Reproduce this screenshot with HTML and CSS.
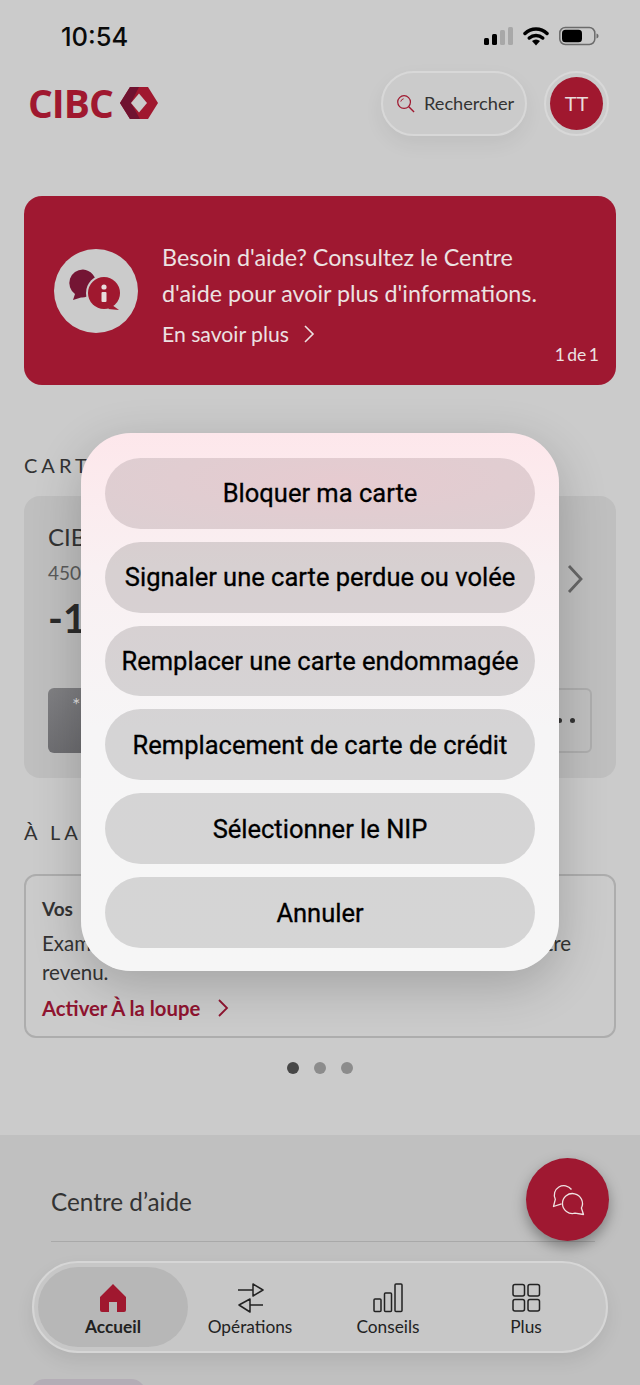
FILE: index.html
```html
<!DOCTYPE html>
<html lang="fr">
<head>
  <meta charset="UTF-8">
  <meta name="viewport" content="width=device-width, initial-scale=1.0">
  <title>CIBC Accueil</title>
  <link rel="stylesheet" href="styles.css">
</head>
<body>
  <div class="ecran">
    <div class="statut">
      <span class="heure">10:54</span>
      <div class="statut-icones">
        <svg width="29" height="20" viewBox="0 0 29 20"><rect x="0" y="12" width="5" height="7" rx="1.5" fill="#000"/><rect x="8" y="8" width="5" height="11" rx="1.5" fill="#000"/><rect x="16" y="4" width="5" height="15" rx="1.5" fill="#a8a8a8"/><rect x="24" y="1" width="5" height="18" rx="1.5" fill="#a8a8a8"/></svg>
        <svg width="26" height="20" viewBox="0 0 26 20"><path d="M2 7.500a16 16 0 0 1 22 0M6.300 12a10 10 0 0 1 13.400 0" fill="none" stroke="#000" stroke-width="3.500" stroke-linecap="round"/><path d="M13 19.500l-4-4.500a6 6 0 0 1 8 0z" fill="#000"/></svg>
        <svg width="40" height="20" viewBox="0 0 40 20"><rect x="0.800" y="1.500" width="35" height="17" rx="5.500" fill="none" stroke="#6b6b6b" stroke-width="1.500"/><rect x="3" y="3.800" width="20" height="12.400" rx="3.500" fill="#000"/><path d="M37.500 7.500c1.500.5 2 1.500 2 2.500s-.5 2-2 2.500z" fill="#6b6b6b"/></svg>
      </div>
    </div>

    <header class="entete">
      <div class="logo">
        <span class="logo-texte">CIBC</span>
        <svg width="38" height="32" viewBox="0 0 38 32"><path d="M0 16L10 0h18l10 16-10 16H10z" fill="#a0182f"/><path d="M0 16L10 0h9L11 16l9 16H10z" fill="#6f1230"/><path d="M19 6.500l8 9.500-8 9.500-8-9.500z" fill="#cbcbcb"/></svg>
      </div>
      <div class="entete-droite">
        <div class="recherche">
          <svg width="19" height="19" viewBox="0 0 20 20"><circle cx="8.500" cy="8.500" r="6.700" fill="none" stroke="#a0182f" stroke-width="1.300"/><path d="M13.500 13.500L19 19" stroke="#a0182f" stroke-width="1.500"/><path d="M5 8a4 4 0 0 1 3-3" fill="none" stroke="#a0182f"/></svg>
          <span>Rechercher</span>
        </div>
        <div class="avatar-halo"><div class="avatar">TT</div></div>
      </div>
    </header>

    <section class="banniere">
      <div class="banniere-icone">
        <svg width="84" height="84" viewBox="0 0 84 84">
          <path d="M29 20.500a13.500 13.500 0 0 0-8 24.500l-2 6 8-2.500a13.500 13.500 0 0 0 2-28z" fill="#741534"/>
          <circle cx="50" cy="44" r="18" fill="#cbcbcb"/>
          <circle cx="50" cy="44" r="16" fill="#a0182f"/>
          <path d="M58 56l7 5-11-1z" fill="#a0182f"/>
          <circle cx="50" cy="38" r="2.600" fill="#e8dcdc"/>
          <rect x="47.500" y="43" width="5" height="10" rx="1" fill="#e8dcdc"/>
        </svg>
      </div>
      <div class="banniere-texte">
        <p>Besoin d'aide? Consultez le Centre<br>d'aide pour avoir plus d'informations.</p>
        <a class="banniere-lien">En savoir plus
          <svg width="12" height="20" viewBox="0 0 12 20"><path d="M2 2l8 8-8 8" fill="none" stroke="#ece2e2" stroke-width="1.600"/></svg>
        </a>
      </div>
      <span class="banniere-page">1 de 1</span>
    </section>

    <h2 class="titre-section titre-cartes">CARTES</h2>
    <section class="carte">
      <div class="carte-haut">
        <div>
          <div class="carte-nom">CIBC</div>
          <div class="carte-numero">4500</div>
          <div class="carte-solde">-1 250</div>
        </div>
        <svg class="carte-fleche" width="16" height="28" viewBox="0 0 16 28"><path d="M2 1l12 13L2 27" fill="none" stroke="#666" stroke-width="2.800"/></svg>
      </div>
      <div class="carte-actions">
        <div class="action-sombre">*</div>
        <div class="action-claire"><i></i><i></i></div>
      </div>
    </section>

    <h2 class="titre-section titre-loupe">À LA LOUPE</h2>
    <section class="loupe">
      <h3>Vos</h3>
      <p class="loupe-ligne"><span>Examinez</span><span>votre</span></p>
      <p>revenu.</p>
      <a class="loupe-lien">Activer À la loupe
        <svg width="12" height="20" viewBox="0 0 12 20"><path d="M2 2l8 8-8 8" fill="none" stroke="#8f1430" stroke-width="1.800"/></svg>
      </a>
    </section>
    <div class="points"><i class="actif"></i><i></i><i></i></div>

    <section class="bas">
      <div class="bas-ligne">Centre d’aide</div>
    </section>

    <button class="bulle">
      <svg width="42" height="42" viewBox="0 0 42 42">
        <path d="M24.500 10.500A9.500 9.500 0 0 0 8.300 20.300L6.500 27.500 14.500 24.800" fill="none" stroke="#efe3e3" stroke-width="1.300" stroke-linejoin="round"/>
        <path d="M28 34.200A10 10 0 1 1 34.400 29L36.500 35.500z" fill="none" stroke="#efe3e3" stroke-width="1.300" stroke-linejoin="round"/>
      </svg>
    </button>

    <nav class="menu">
      <a class="menu-item actif">
        <svg width="30" height="30" viewBox="0 0 30 30"><path d="M15 1L2 14v13a2 2 0 0 0 2 2h7V19h8v10h7a2 2 0 0 0 2-2V14z" fill="#a0182f"/></svg>
        <span>Accueil</span>
      </a>
      <a class="menu-item">
        <svg width="30" height="30" viewBox="0 0 30 30"><path d="M3 7h15M18 1l10 6-10 6zM15 22h13M15 16L4 22l11 7z" fill="none" stroke="#222" stroke-width="1.500" stroke-linejoin="round"/></svg>
        <span>Opérations</span>
      </a>
      <a class="menu-item">
        <svg width="30" height="30" viewBox="0 0 30 30"><rect x="1" y="16" width="7" height="12.500" rx="1" fill="none" stroke="#222" stroke-width="1.500"/><rect x="11.500" y="10" width="7" height="18.500" rx="1" fill="none" stroke="#222" stroke-width="1.500"/><rect x="22" y="1" width="7" height="27.500" rx="1" fill="none" stroke="#222" stroke-width="1.500"/></svg>
        <span>Conseils</span>
      </a>
      <a class="menu-item">
        <svg width="30" height="30" viewBox="0 0 30 30"><rect x="2" y="1.500" width="11.500" height="11.500" rx="2" fill="none" stroke="#222" stroke-width="1.500"/><rect x="17" y="1.500" width="11.500" height="11.500" rx="2" fill="none" stroke="#222" stroke-width="1.500"/><rect x="2" y="16.500" width="11.500" height="11.500" rx="2" fill="none" stroke="#222" stroke-width="1.500"/><rect x="17" y="16.500" width="11.500" height="11.500" rx="2" fill="none" stroke="#222" stroke-width="1.500"/></svg>
        <span>Plus</span>
      </a>
    </nav>
    <div class="pastille"></div>

    <div class="dialogue">
      <button>Bloquer ma carte</button>
      <button>Signaler une carte perdue ou volée</button>
      <button>Remplacer une carte endommagée</button>
      <button>Remplacement de carte de crédit</button>
      <button>Sélectionner le NIP</button>
      <button>Annuler</button>
    </div>
  </div>
</body>
</html>
```

FILE: styles.css
```css
* { box-sizing: border-box; margin: 0; padding: 0; }
body {
  font-family: 'Lato', sans-serif;
  background: #cbcbcb;
  color: #2b2b2b;
  overflow: hidden;
}
a { display: inline-flex; align-items: center; }
.ecran {
  position: relative;
  width: 640px;
  height: 1385px;
  overflow: hidden;
  padding: 0 24px;
}

.statut {
  display: flex;
  justify-content: space-between;
  align-items: center;
  height: 72px;
  padding: 0 17px 0 37px;
}
.heure { font-family: 'Inter', sans-serif; font-size: 25.500px; font-weight: 500; color: #0a0a0a; }
.statut-icones { display: flex; align-items: center; gap: 10px; }

.entete {
  display: flex;
  justify-content: space-between;
  align-items: center;
  height: 62px;
  padding: 0 7px 0 4px;
}
.logo { display: flex; align-items: center; gap: 7px; }
.logo-texte { font-family: 'Open Sans', sans-serif; font-size: 39px; font-weight: 700; color: #a0182f; letter-spacing: -1px; margin-top: -2px; }
.entete-droite { display: flex; align-items: center; gap: 17px; }
.recherche {
  display: flex;
  align-items: center;
  gap: 9px;
  width: 146px;
  height: 65px;
  padding: 0 0 0 13px;
  border: 2px solid #d8d8d8;
  border-radius: 33px;
  font-size: 18.200px;
  color: #333;
  box-shadow: 0 8px 20px rgba(0,0,0,0.06);
}
.avatar-halo { padding: 4px; border: 2px solid #d8d8d8; border-radius: 50%; }
.avatar {
  width: 53px;
  height: 53px;
  border-radius: 50%;
  background: #a0182f;
  color: #e8dcdc;
  font-size: 20px;
  display: flex;
  align-items: center;
  justify-content: center;
}

.banniere {
  position: relative;
  display: flex;
  align-items: flex-start;
  gap: 24px;
  height: 189px;
  margin-top: 62px;
  padding: 43px 30px 0;
  background: #9f1831;
  border-radius: 18px;
  color: #ece2e2;
}
.banniere-icone {
  flex: none;
  width: 84px;
  height: 84px;
  margin-top: 10px;
  border-radius: 50%;
  background: #cbcbcb;
}
.banniere-texte p { font-size: 23.300px; line-height: 36px; }
.banniere-lien { gap: 14px; margin-top: 10px; font-size: 21.200px; }
.banniere-page { position: absolute; right: 17px; bottom: 20px; font-size: 17.500px; word-spacing: -2px; }

.titre-section { font-size: 20px; font-weight: 400; letter-spacing: 4px; color: #333; }
.titre-cartes { margin-top: 67px; line-height: 26px; }
.carte {
  height: 282px;
  margin-top: 18px;
  padding: 25px 24px;
  background: #bfbfbf;
  border-radius: 16px;
}
.carte-haut { display: flex; justify-content: space-between; align-items: flex-start; height: 167px; }
.carte-nom { font-size: 24px; line-height: 32px; color: #333; }
.carte-numero { font-size: 19px; line-height: 32px; margin-top: 4px; color: #5a5a5a; }
.carte-solde { font-size: 40px; font-weight: 700; line-height: 50px; color: #2b2b2b; margin-top: 4px; }
.carte-fleche { margin-top: 44px; margin-right: 9px; }
.carte-actions { display: flex; justify-content: space-between; height: 65px; }
.action-sombre {
  width: 200px;
  padding: 4px 0 0 24px;
  background: linear-gradient(160deg, #808083, #5c5c60);
  border-radius: 6px;
  color: #ddd;
  font-size: 20px;
}
.action-claire {
  width: 200px;
  display: flex;
  justify-content: flex-end;
  align-items: center;
  gap: 8px;
  padding-right: 15px;
  border: 2px solid #adadad;
  border-radius: 6px;
}
.action-claire i { width: 5px; height: 5px; border-radius: 50%; background: #333; }

.titre-loupe { margin-top: 41px; line-height: 26px; }
.loupe {
  height: 164px;
  margin-top: 29px;
  padding: 20px 16px;
  border: 2px solid #adadad;
  border-radius: 12px;
  color: #333;
}
.loupe h3 { font-size: 19px; font-weight: 700; line-height: 26px; }
.loupe p { font-size: 20.500px; line-height: 29px; }
.loupe-ligne { display: flex; justify-content: space-between; margin-top: 7px; margin-right: 27px; }
.loupe-lien { gap: 17px; margin-top: 9px; color: #8f1430; font-size: 20.300px; font-weight: 700; }
.points { display: flex; justify-content: center; gap: 15px; margin-top: 24px; }
.points i { width: 12px; height: 12px; border-radius: 50%; background: #8c8c8c; }
.points i.actif { background: #474747; }

.bas {
  position: absolute;
  left: 0;
  right: 0;
  top: 1135px;
  bottom: 0;
  padding: 0 45px 0 51px;
  background: #c0c0c0;
}
.bas-ligne {
  height: 107px;
  padding-top: 52px;
  font-size: 24.300px;
  border-bottom: 1px solid #a9a9a9;
  color: #333;
}
.bulle {
  position: absolute;
  left: 526px;
  top: 1158px;
  width: 83px;
  height: 83px;
  border: none;
  border-radius: 50%;
  background: #9f1831;
  box-shadow: 0 6px 14px rgba(0,0,0,0.35);
  display: flex;
  align-items: center;
  justify-content: center;
}
.menu {
  position: absolute;
  left: 32px;
  top: 1261px;
  width: 576px;
  height: 92px;
  display: flex;
  padding: 4px;
  border: 2px solid #d6d6d6;
  border-radius: 46px;
  background: #c7c7c7;
  box-shadow: 0 8px 18px rgba(0,0,0,0.08);
}
.menu-item {
  flex: none;
  width: 138px;
  flex-direction: column;
  justify-content: center;
  gap: 3px;
  padding-top: 5px;
  font-size: 17.300px;
  color: #222;
}
.menu-item.actif {
  width: 150px;
  margin-right: -7px;
  border-radius: 40px;
  background: #b7b7b7;
  font-weight: 700;
}
.pastille {
  position: absolute;
  left: 30px;
  top: 1379px;
  width: 116px;
  height: 30px;
  border-radius: 15px;
  background: #b4adb6;
}

.dialogue {
  position: absolute;
  left: 81px;
  top: 433px;
  width: 478px;
  height: 538px;
  display: flex;
  flex-direction: column;
  gap: 13px;
  padding: 25px 24px 23px;
  border-radius: 50px;
  background: linear-gradient(180deg, #fde7eb 0%, #f9f0f2 25%, #f6f5f6 55%, #f6f6f6 100%);
  box-shadow: 0 14px 50px rgba(0,0,0,0.2);
}
.dialogue button {
  flex: 1;
  border: none;
  border-radius: 36px;
  background: rgba(0,0,0,0.135);
  font-family: 'Roboto', sans-serif;
  font-size: 25.500px;
  font-weight: 400;
  -webkit-text-stroke: 0.3px #000;
  color: #000;
}
.dialogue button:first-child {
  background: radial-gradient(ellipse at 55% 30%, #e6cbd0, #dccfd2);
}
```
